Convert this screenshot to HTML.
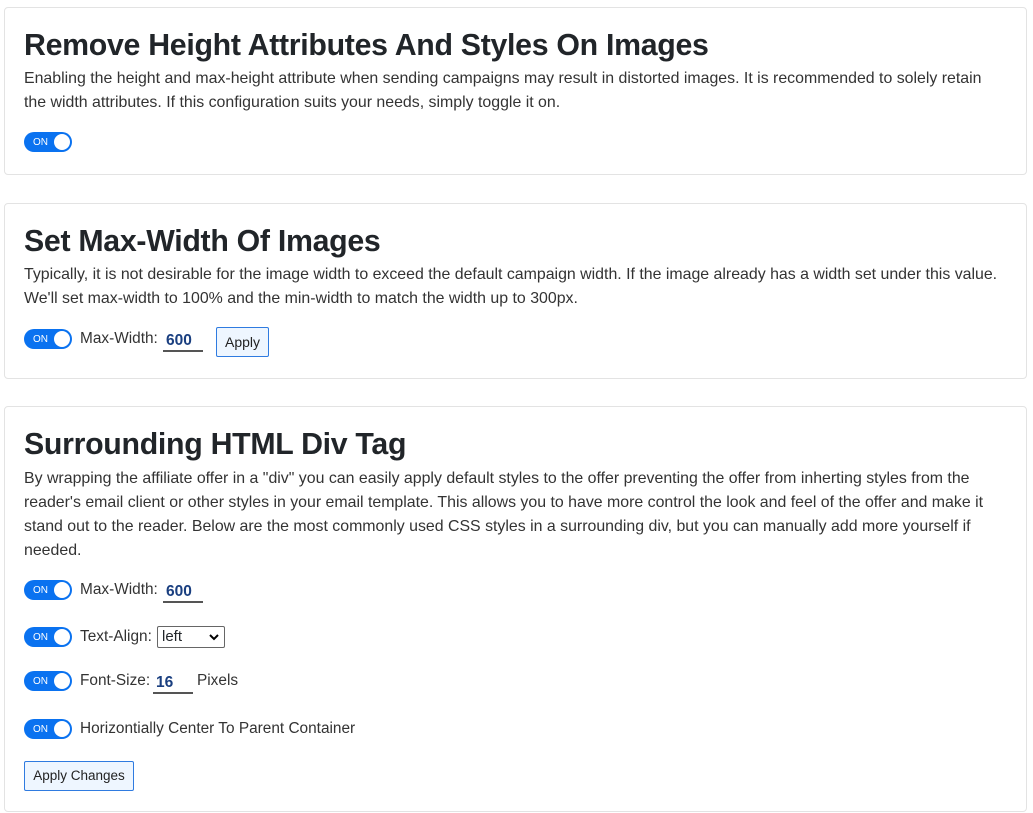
<!DOCTYPE html>
<html><head><style>
body{margin:0;width:1033px;height:813px;background:#fff;font-family:"Liberation Sans",sans-serif;color:#212529;position:relative;overflow:hidden}
.card{position:absolute;left:4px;width:1023px;border:1px solid #e3e3e3;border-radius:4px;box-sizing:border-box}
h2{position:absolute;left:24px;margin:0;font-size:30.3px;font-weight:bold;white-space:nowrap;letter-spacing:-0.3px}
p{position:absolute;left:24px;margin:0;font-size:15.9px;line-height:24px;white-space:nowrap;color:#333}
.tg{position:absolute;left:24px;width:48px;height:20px;border-radius:10px;background:#0a72f0}
.tg:before{content:"ON";position:absolute;left:9px;top:5px;font-size:10px;color:#fff}
.tg:after{content:"";position:absolute;right:2px;top:2px;width:16px;height:16px;border-radius:50%;background:#fff}
.lbl{position:absolute;font-size:15.4px;color:#333;white-space:nowrap}
.inp{position:absolute;height:22px;border-bottom:2px solid #555;font-weight:bold;color:#1a3f80;font-size:15.5px;box-sizing:border-box;padding-left:3px;padding-top:2px}
.btn{position:absolute;border:1px solid #2f7be0;border-radius:2px;background:#eef6ff;font-size:14px;color:#222;box-sizing:border-box;text-align:center}
</style></head><body>
<div class="card" style="top:7px;height:168px"></div>
<h2 style="top:29px">Remove Height Attributes And Styles On Images</h2>
<p style="top:67px">Enabling the height and max-height attribute when sending campaigns may result in distorted images. It is recommended to solely retain<br>the width attributes. If this configuration suits your needs, simply toggle it on.</p>
<div class="tg" style="top:132px"></div>

<div class="card" style="top:203px;height:176px"></div>
<h2 style="top:225px">Set Max-Width Of Images</h2>
<p style="top:263px">Typically, it is not desirable for the image width to exceed the default campaign width. If the image already has a width set under this value.<br>We'll set max-width to 100% and the min-width to match the width up to 300px.</p>
<div class="tg" style="top:329px"></div>
<div class="lbl" style="left:80px;top:330px">Max-Width:</div>
<div class="inp" style="left:163px;top:330px;width:40px">600</div>
<div class="btn" style="left:216px;top:327px;width:53px;height:30px;line-height:28px">Apply</div>

<div class="card" style="top:406px;height:406px"></div>
<h2 style="top:428px">Surrounding HTML Div Tag</h2>
<p style="top:467px">By wrapping the affiliate offer in a "div" you can easily apply default styles to the offer preventing the offer from inherting styles from the<br>reader's email client or other styles in your email template. This allows you to have more control the look and feel of the offer and make it<br>stand out to the reader. Below are the most commonly used CSS styles in a surrounding div, but you can manually add more yourself if<br>needed.</p>
<div class="tg" style="top:580px"></div>
<div class="lbl" style="left:80px;top:581px">Max-Width:</div>
<div class="inp" style="left:163px;top:581px;width:40px">600</div>
<div class="tg" style="top:627px"></div>
<div class="lbl" style="left:80px;top:628px">Text-Align:</div>
<div style="position:absolute;left:157px;top:626px;width:68px;height:22px;border:1px solid #666;border-radius:2px;box-sizing:border-box;font-size:15px;padding-left:4px;line-height:20px">left<svg style="position:absolute;right:5px;top:7px" width="10" height="7" viewBox="0 0 10 7"><path d="M1 1l4 4 4-4" stroke="#000" stroke-width="2" fill="none"/></svg></div>
<div class="tg" style="top:671px"></div>
<div class="lbl" style="left:80px;top:672px">Font-Size:</div>
<div class="inp" style="left:153px;top:672px;width:40px">16</div>
<div class="lbl" style="left:197px;top:672px">Pixels</div>
<div class="tg" style="top:719px"></div>
<div class="lbl" style="left:80px;top:720px">Horizontially Center To Parent Container</div>
<div class="btn" style="left:24px;top:761px;width:110px;height:30px;line-height:28px;font-size:13.5px">Apply Changes</div>
</body></html>
